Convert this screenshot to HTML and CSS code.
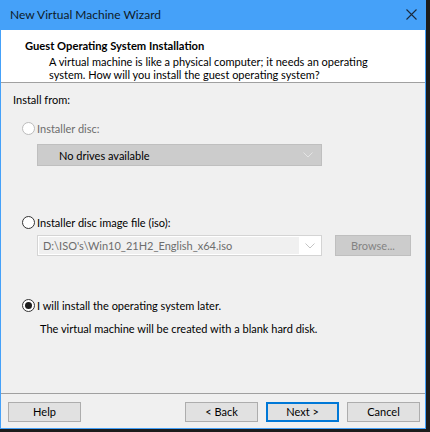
FILE: index.html
```html
<!DOCTYPE html>
<html>
<head>
<meta charset="utf-8">
<link rel="stylesheet" href="styles.css">
</head>
<body>
<div class="window">
  <div class="titlebar">
    <span class="title">New Virtual Machine Wizard</span>
    <svg class="close" width="11" height="11" viewBox="0 0 11 11"><path d="M0.5 0.5L10.5 10.5M10.5 0.5L0.5 10.5" stroke="#1b2a3c" stroke-width="1.1" fill="none"/></svg>
  </div>
  <div class="header">
    <div class="h-title">Guest Operating System Installation</div>
    <div class="h-desc">A virtual machine is like a physical computer; it needs an operating<br>system. How will you install the guest operating system?</div>
  </div>
  <div class="content">
    <div class="label">Install from:</div>
    <div class="radio-row disabled r1">
      <span class="radio"></span><span>Installer disc:</span>
    </div>
    <div class="dropdown">
      <span class="dd-text">No drives available</span>
      <svg class="chev" width="10" height="6" viewBox="0 0 10 6"><path d="M0.5 0.5L5 5L9.5 0.5" stroke="#e4e4e4" stroke-width="1" fill="none"/></svg>
    </div>
    <div class="radio-row r2">
      <span class="radio"></span><span>Installer disc image file (iso):</span>
    </div>
    <div class="iso-row">
      <div class="combo">
        <span class="combo-field">D:\ISO's\Win10_21H2_English_x64.iso</span>
        <svg class="chev2" width="10" height="6" viewBox="0 0 10 6"><path d="M0.5 0.5L5 5L9.5 0.5" stroke="#c4c4c4" stroke-width="1" fill="none"/></svg>
      </div>
      <div class="browse">Browse...</div>
    </div>
    <div class="radio-row r3">
      <span class="radio checked"></span><span>I will install the operating system later.</span>
    </div>
    <div class="later-desc">The virtual machine will be created with a blank hard disk.</div>
  </div>
  <div class="footer">
    <div class="btn">Help</div>
    <div class="spacer"></div>
    <div class="btn">&lt; Back</div>
    <div class="btn default">Next &gt;</div>
    <div class="btn">Cancel</div>
  </div>
</div>
</body>
</html>
```
FILE: styles.css
```css
html, body {
  margin: 0;
  padding: 0;
  background: #1c1c1c;
}
body {
  width: 430px;
  height: 432px;
  overflow: hidden;
  font-family: "Lato", "Noto Sans", sans-serif;
  font-size: 11px;
  color: #000;
}
.window {
  width: 426px;
  height: 429px;
  box-sizing: border-box;
  border: 1px solid #45a1f9;
  border-top: none;
  background: #f0f0f0;
  display: flex;
  flex-direction: column;
}
.titlebar {
  height: 30px;
  margin: 0 -1px;
  background: #45a1f9;
  display: flex;
  align-items: center;
  padding: 0 9px 0 10px;
  justify-content: space-between;
}
.title {
  color: #0e1a28;
  font-size: 12px;
  line-height: 15px;
  padding-bottom: 1px;
}
.close {
  margin-bottom: 1px;
}
.header {
  background: #fff;
  height: 53px;
  box-sizing: border-box;
  border-bottom: 1px solid #a0a0a0;
  padding: 8px 0 0 24px;
}
.h-title {
  font-weight: bold;
  font-size: 11.2px;
  line-height: 15px;
}
.h-desc {
  margin-left: 24px;
  margin-top: 2px;
  line-height: 13px;
  white-space: nowrap;
}
.content {
  flex: 1;
  padding: 9px 0 0 12px;
  display: flex;
  flex-direction: column;
  align-items: flex-start;
  border-bottom: 1px solid #a0a0a0;
}
.label {
  line-height: 15px;
}
.radio-row {
  display: flex;
  align-items: center;
  gap: 2px;
  margin-left: 9px;
  line-height: 15px;
}
.radio {
  width: 13px;
  height: 13px;
  box-sizing: border-box;
  border: 1px solid #333;
  border-radius: 50%;
  background: #fff;
  display: flex;
  align-items: center;
  justify-content: center;
}
.radio.checked::after {
  content: "";
  width: 7px;
  height: 7px;
  border-radius: 50%;
  background: #1e1e1e;
}
.disabled {
  color: #6d6d6d;
}
.disabled .radio {
  border-color: #bcbcbc;
}
.r1 { margin-top: 14px; }
.dropdown {
  margin-top: 8px;
  margin-left: 24px;
  width: 285px;
  height: 22px;
  box-sizing: border-box;
  background: #cccccc;
  border: 1px solid #bfbfbf;
  display: flex;
  align-items: center;
  justify-content: space-between;
  padding: 0 8px 0 21px;
}
.dd-text {
  line-height: 15px;
}
.r2 { margin-top: 49px; }
.iso-row {
  margin-top: 5px;
  margin-left: 24px;
  display: flex;
  gap: 13px;
}
.combo {
  width: 285px;
  height: 21px;
  box-sizing: border-box;
  background: #ffffff;
  border: 1px solid #d4d4d4;
  display: flex;
  align-items: center;
  padding: 1px 6px 1px 1px;
  gap: 6px;
}
.combo-field {
  flex: 1;
  height: 100%;
  background: #f0f0f0;
  color: #6d6d6d;
  padding-left: 4px;
  line-height: 17px;
}
.browse {
  width: 76px;
  height: 21px;
  box-sizing: border-box;
  background: #cccccc;
  border: 1px solid #bfbfbf;
  color: #838383;
  text-align: center;
  line-height: 19px;
}
.r3 { margin-top: 42px; }
.later-desc {
  margin-top: 8px;
  margin-left: 27px;
  line-height: 15px;
}
.footer {
  height: 34px;
  box-sizing: border-box;
  padding: 8px 5px 0 7px;
  display: flex;
  gap: 8px;
  align-items: flex-start;
}
.spacer { flex: 1; }
.btn {
  width: 73px;
  height: 20px;
  box-sizing: border-box;
  background: #e1e1e1;
  border: 1px solid #adadad;
  text-align: center;
  line-height: 18px;
}
.btn.default {
  border: 2px solid #0078d7;
  line-height: 16px;
}
```
